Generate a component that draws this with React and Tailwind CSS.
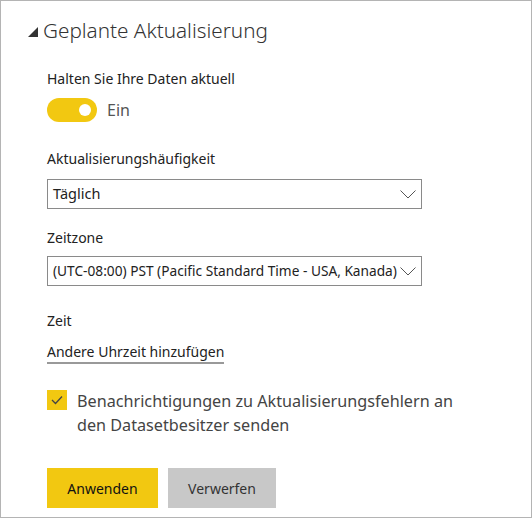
import React from "react";

function Chevron() {
  return (
    <svg width="16" height="9" viewBox="0 0 16 9" fill="none" className="shrink-0">
      <path d="M0.5 0.5 L8 8 L15.5 0.5" stroke="#555" strokeWidth="1" />
    </svg>
  );
}

function Select({ value, size }) {
  return (
    <div className="w-[375px] h-[30px] border border-[#8a8a8a] flex items-center justify-between pl-[5px] pr-[5px] bg-white">
      <span className={`${size} text-[#222] whitespace-nowrap`}>{value}</span>
      <Chevron />
    </div>
  );
}

export default function App() {
  return (
    <div
      className="w-[532px] h-[518px] border border-[#b4b4b4] bg-white box-border relative"
      style={{ fontFamily: '"Noto Sans", "Open Sans", sans-serif' }}
    >
      <div className="flex items-center h-[28px] mt-[16px] ml-[27px]">
        <div className="w-0 h-0 border-l-[10px] border-l-transparent border-b-[10px] border-b-[#333] mt-[1px]" />
        <span className="ml-[5px] text-[20.7px] text-[#333] font-light">Geplante Aktualisierung</span>
      </div>

      <div className="pl-[46px]">
        <div className="mt-[23px] h-[20px] flex items-center text-[14px] text-[#222]">Halten Sie Ihre Daten aktuell</div>

        <div className="mt-[10px] flex items-center">
          <div className="w-[50px] h-[24px] rounded-full bg-[#f2c811] flex items-center justify-end pr-[6px]">
            <div className="w-[12px] h-[12px] rounded-full bg-white" />
          </div>
          <span className="ml-[10px] text-[16px] text-[#555]">Ein</span>
        </div>

        <div className="mt-[26px] h-[20px] flex items-center text-[14px] text-[#222]">Aktualisierungshäufigkeit</div>
        <div className="mt-[11px]">
          <Select value="Täglich" size="text-[14.5px]" />
        </div>

        <div className="mt-[18px] h-[20px] flex items-center text-[14px] text-[#222]">Zeitzone</div>
        <div className="mt-[9px]">
          <Select value="(UTC-08:00) PST (Pacific Standard Time - USA, Kanada)" size="text-[13.7px]" />
        </div>

        <div className="mt-[24px] h-[20px] flex items-center text-[14px] text-[#222]">Zeit</div>
        <div className="mt-[9px]">
          <span className="inline-block text-[14px] text-[#222] border-b-2 border-[#999] leading-[20px]">Andere Uhrzeit hinzufügen</span>
        </div>

        <div className="mt-[26px] flex items-start">
          <div className="w-[20px] h-[20px] bg-[#f2c811] flex items-center justify-center shrink-0">
            <svg width="12" height="10" viewBox="0 0 12 10" fill="none">
              <path d="M1 5 L4.5 8.5 L11 1.5" stroke="#444" strokeWidth="1.3" />
            </svg>
          </div>
          <div className="ml-[10px] text-[16.2px] text-[#444] leading-[24px] -mt-[1px] w-[400px]">
            Benachrichtigungen zu Aktualisierungsfehlern an den Datasetbesitzer senden
          </div>
        </div>

        <div className="mt-[31px] flex gap-[10px]">
          <button className="w-[111px] h-[40px] bg-[#f2c811] text-[14px] text-[#111]">Anwenden</button>
          <button className="w-[108px] h-[40px] bg-[#c8c8c8] text-[14px] text-[#333]">Verwerfen</button>
        </div>
      </div>
    </div>
  );
}
